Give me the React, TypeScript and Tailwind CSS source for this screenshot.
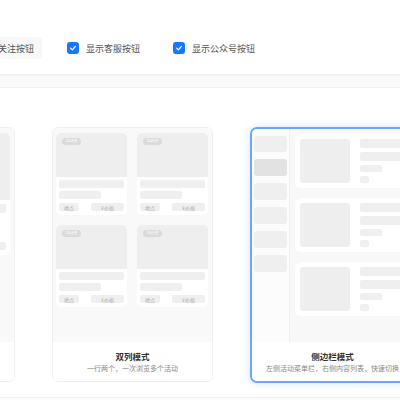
import React from "react";

const font = { fontFamily: '"Noto Sans CJK SC", "Noto Sans", sans-serif' };

function Check({ checked, label }: { checked: boolean; label: string }) {
  return (
    <div className={`flex items-center gap-[7px] h-[22px] px-2 rounded-[3px] ${checked ? "" : "bg-[#f8f8f8]"}`}>
      <div className={`w-[12px] h-[12px] rounded-[3px] flex items-center justify-center ${checked ? "bg-[#1677ff]" : "border border-[#d9d9d9] bg-white"}`}>
        {checked && (
          <svg width="8" height="8" viewBox="0 0 10 10" fill="none">
            <path d="M2 5.2 L4.2 7.3 L8 3" stroke="white" strokeWidth="1.6" strokeLinecap="round" strokeLinejoin="round" />
          </svg>
        )}
      </div>
      <span className="text-[9px] leading-none text-[#555] whitespace-nowrap">{label}</span>
    </div>
  );
}

function GridItem() {
  return (
    <div className="bg-white rounded-[5px] overflow-hidden h-[82px] flex flex-col">
      <div className="h-[44px] bg-[#eeeeee] relative">
        <div className="absolute left-[6px] top-[5px] w-[19px] h-[7px] rounded-full bg-[#dadada] flex items-center justify-center">
          <span className="text-[3px] leading-none text-white whitespace-nowrap">活动标签</span>
        </div>
      </div>
      <div className="px-[3px] pt-[3px] flex flex-col">
        <div className="h-[8px] rounded-[2px] bg-[#efefef]" />
        <div className="h-[8px] w-[42px] mt-[3px] rounded-[2px] bg-[#efefef]" />
        <div className="flex justify-between mt-[4px]">
          <div className="h-[8px] w-[20px] rounded-[2px] bg-[#efefef] flex items-center justify-center">
            <span className="text-[5px] leading-none text-[#aaa]">地点</span>
          </div>
          <div className="h-[8px] w-[33px] rounded-[2px] bg-[#efefef] flex items-center justify-center">
            <span className="text-[5px] leading-none text-[#aaa]">¥价格</span>
          </div>
        </div>
      </div>
    </div>
  );
}

function Footer({ title, sub }: { title?: string; sub?: string }) {
  return (
    <div className="h-[39px] flex flex-col items-center pt-[9px] bg-white">
      {title && <div className="text-[8.5px] leading-[10px] font-bold text-[#333] whitespace-nowrap">{title}</div>}
      {sub && <div className="text-[7px] leading-[9px] mt-[3px] text-[#888] whitespace-nowrap">{sub}</div>}
    </div>
  );
}

function SideItem() {
  return (
    <div className="bg-white rounded-[6px] h-[54px] p-[5px] flex gap-[10px]">
      <div className="w-[50px] h-[44px] rounded-[3px] bg-[#eeeeee] shrink-0" />
      <div className="flex-1 flex flex-col">
        <div className="h-[9px] rounded-[2px] bg-[#efefef]" />
        <div className="h-[9px] mt-[4px] rounded-[2px] bg-[#efefef]" />
        <div className="h-[7px] w-[22px] mt-[4px] rounded-[2px] bg-[#efefef]" />
        <div className="h-[7px] w-[9px] mt-[4px] rounded-[2px] bg-[#efefef]" />
      </div>
    </div>
  );
}

export default function App() {
  return (
    <div className="w-[400px] h-[400px] overflow-hidden bg-[#fafafa] relative" style={font}>
      <div className="h-[74px] bg-white shadow-[0_1px_3px_rgba(0,0,0,0.07)] flex items-center pt-[22px]">
        <div className="flex items-center gap-[17px] ml-[-47px]">
          <Check checked={false} label="显示关注按钮" />
          <Check checked label="显示客服按钮" />
          <Check checked label="显示公众号按钮" />
        </div>
      </div>
      <div className="mt-[13px] h-[311px] bg-white border-t border-b border-[#f0f0f0] pt-[39px]">
        <div className="flex gap-[37px] ml-[-146px] items-start">
          {/* card 1 */}
          <div className="w-[161px] h-[255px] shrink-0 rounded-[6px] border border-[#f0f0f0] overflow-hidden flex flex-col">
            <div className="flex-1 bg-[#f9f9f9] px-[4px] pt-[5px]">
              <div className="bg-white rounded-[5px] overflow-hidden h-[122px] flex flex-col">
                <div className="h-[67px] bg-[#eeeeee]" />
                <div className="px-[4px] pt-[4px] flex flex-col">
                  <div className="h-[9px] rounded-[2px] bg-[#efefef]" />
                  <div className="h-[9px] w-[80px] mt-[4px] rounded-[2px] bg-[#efefef]" />
                  <div className="flex justify-between mt-[16px]">
                    <div className="h-[8px] w-[24px] rounded-[2px] bg-[#efefef]" />
                    <div className="h-[8px] w-[30px] rounded-[2px] bg-[#efefef]" />
                  </div>
                </div>
              </div>
            </div>
            <Footer />
          </div>
          {/* card 2 */}
          <div className="w-[161px] h-[255px] shrink-0 rounded-[6px] border border-[#f0f0f0] overflow-hidden flex flex-col">
            <div className="flex-1 bg-[#f9f9f9] pl-[3px] pr-[4px] pt-[5px]">
              <div className="grid grid-cols-2 gap-[10px]">
                <GridItem />
                <GridItem />
                <GridItem />
                <GridItem />
              </div>
            </div>
            <Footer title="双列模式" sub="一行两个，一次浏览多个活动" />
          </div>
          {/* card 3 */}
          <div className="w-[165px] h-[256px] shrink-0 rounded-[7px] border-2 border-[#69a7ff] shadow-[0_0_8px_rgba(22,119,255,0.18)] overflow-hidden flex flex-col">
            <div className="flex-1 flex">
              <div className="w-[38px] bg-[#fcfcfc] border-r border-[#f0f0f0] px-[2px] pt-[7px] flex flex-col gap-[7px]">
                <div className="h-[16px] rounded-[3px] bg-[#efefef]" />
                <div className="h-[17px] rounded-[3px] bg-[#e2e2e2]" />
                <div className="h-[17px] rounded-[3px] bg-[#efefef]" />
                <div className="h-[17px] rounded-[3px] bg-[#efefef]" />
                <div className="h-[17px] rounded-[3px] bg-[#efefef]" />
                <div className="h-[17px] rounded-[3px] bg-[#efefef]" />
              </div>
              <div className="flex-1 bg-[#f8f8f8] pl-[5px] pt-[5px] flex flex-col gap-[10px]">
                <SideItem />
                <SideItem />
                <SideItem />
              </div>
            </div>
            <Footer title="侧边栏模式" sub="左侧活动菜单栏，右侧内容列表，快速切换" />
          </div>
        </div>
      </div>
    </div>
  );
}
